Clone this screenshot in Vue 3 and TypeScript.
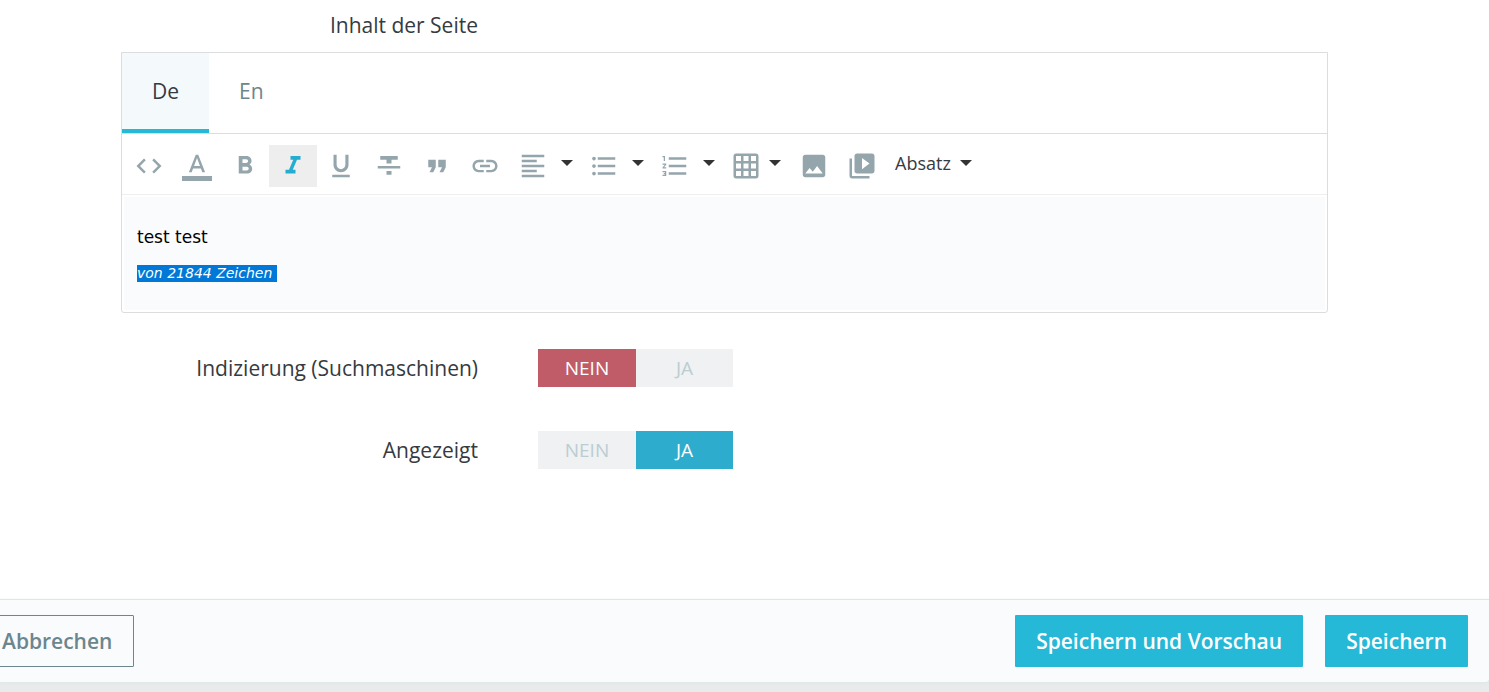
<script setup lang="ts">
import { ref } from 'vue'

interface Tool {
  id: string
  label: string
  path: string
  menu?: boolean
  tight?: boolean
}

const tools: Tool[] = [
  { id: 'code', label: 'Quelltext', path: 'M9.4 16.6 4.8 12l4.6-4.6L8 6l-6 6 6 6 1.4-1.4zm5.2 0 4.6-4.6-4.6-4.6L16 6l6 6-6 6-1.4-1.4z' },
  { id: 'color', label: 'Textfarbe', path: 'M0 20h24v4H0zM11 3 5.5 17h2.25l1.12-3h6.25l1.12 3h2.25L13 3h-2zm-1.38 9L12 5.67 14.38 12H9.62z' },
  { id: 'bold', label: 'Fett', path: 'M15.6 10.79c.97-.67 1.65-1.77 1.65-2.79 0-2.26-1.75-4-4-4H7v14h7.04c2.09 0 3.71-1.7 3.71-3.79 0-1.52-.86-2.82-2.15-3.42zM10 6.5h3c.83 0 1.5.67 1.5 1.5s-.67 1.5-1.5 1.5h-3v-3zm3.5 9H10v-3h3.5c.83 0 1.5.67 1.5 1.5s-.67 1.5-1.5 1.5z' },
  { id: 'italic', label: 'Kursiv', path: 'M10 4v3h2.21l-3.42 8H6v3h8v-3h-2.21l3.42-8H18V4z' },
  { id: 'underline', label: 'Unterstrichen', path: 'M12 17c3.31 0 6-2.69 6-6V3h-2.5v8c0 1.93-1.57 3.5-3.5 3.5S8.5 12.93 8.5 11V3H6v8c0 3.31 2.69 6 6 6zm-7 2v2h14v-2H5z' },
  { id: 'strike', label: 'Durchgestrichen', path: 'M10 19h4v-3h-4v3zM5 4v3h5v3h4V7h5V4H5zM3 14h18v-2H3v2z' },
  { id: 'quote', label: 'Zitat', path: 'M6 17h3l2-4V7H5v6h3zm8 0h3l2-4V7h-6v6h3z' },
  { id: 'link', label: 'Link', path: 'M3.9 12c0-1.71 1.39-3.1 3.1-3.1h4V7H7c-2.76 0-5 2.24-5 5s2.24 5 5 5h4v-1.9H7c-1.71 0-3.1-1.39-3.1-3.1zM8 13h8v-2H8v2zm9-6h-4v1.9h4c1.71 0 3.1 1.39 3.1 3.1s-1.39 3.1-3.1 3.1h-4V17h4c2.76 0 5-2.24 5-5s-2.24-5-5-5z' },
  { id: 'align', label: 'Ausrichtung', menu: true, path: 'M15 15H3v2h12v-2zm0-8H3v2h12V7zM3 13h18v-2H3v2zm0 8h18v-2H3v2zM3 3v2h18V3H3z' },
  { id: 'ul', label: 'Aufzählung', menu: true, path: 'M4 10.5c-.83 0-1.5.67-1.5 1.5s.67 1.5 1.5 1.5 1.5-.67 1.5-1.5-.67-1.5-1.5-1.5zm0-6c-.83 0-1.5.67-1.5 1.5S3.17 7.5 4 7.5 5.5 6.83 5.5 6 4.83 4.5 4 4.5zm0 12c-.83 0-1.5.68-1.5 1.5s.68 1.5 1.5 1.5 1.5-.68 1.5-1.5-.67-1.5-1.5-1.5zM7 19h14v-2H7v2zm0-6h14v-2H7v2zm0-8v2h14V5H7z' },
  { id: 'ol', label: 'Nummerierung', menu: true, path: 'M2 17h2v.5H3v1h1v.5H2v1h3v-4H2v1zm1-9h1V4H2v1h1v3zm-1 3h1.8L2 13.1v.9h3v-1H3.2L5 10.9V10H2v1zm5-6v2h14V5H7zm0 14h14v-2H7v2zm0-6h14v-2H7v2z' },
  { id: 'table', label: 'Tabelle', menu: true, tight: true, path: 'M20 2H4c-1.1 0-2 .9-2 2v16c0 1.1.9 2 2 2h16c1.1 0 2-.9 2-2V4c0-1.1-.9-2-2-2zM8 20H4v-4h4v4zm0-6H4v-4h4v4zm0-6H4V4h4v4zm6 12h-4v-4h4v4zm0-6h-4v-4h4v4zm0-6h-4V4h4v4zm6 12h-4v-4h4v4zm0-6h-4v-4h4v4zm0-6h-4V4h4v4z' },
  { id: 'image', label: 'Bild', path: 'M21 19V5c0-1.1-.9-2-2-2H5c-1.1 0-2 .9-2 2v14c0 1.1.9 2 2 2h14c1.1 0 2-.9 2-2zM8.5 13.5l2.5 3.01L14.5 12l4.5 6H5l3.5-4.5z' },
  { id: 'video', label: 'Video', path: 'M4 6H2v14c0 1.1.9 2 2 2h14v-2H4V6zm16-4H8c-1.1 0-2 .9-2 2v12c0 1.1.9 2 2 2h12c1.1 0 2-.9 2-2V4c0-1.1-.9-2-2-2zm-8 12.5v-9l6 4.5-6 4.5z' },
]

const languages = ['De', 'En']
const language = ref('De')
const activeTool = ref('italic')
const indexing = ref('nein')
const displayed = ref('ja')
</script>

<template>
  <main class="page">
    <form class="card" @submit.prevent>
      <div class="fields">
        <div class="row heading">
          <span id="content-label" class="label">Inhalt der Seite</span>
        </div>

        <section class="editor" aria-labelledby="content-label">
          <div class="tabs" role="tablist">
            <button
              v-for="item in languages"
              :key="item"
              type="button"
              role="tab"
              class="tab"
              :class="{ active: language === item }"
              :aria-selected="language === item"
              @click="language = item"
            >{{ item }}</button>
          </div>
          <div class="toolbar" role="toolbar" aria-label="Formatierung">
            <button
              v-for="tool in tools"
              :key="tool.id"
              type="button"
              class="tool"
              :class="{ active: activeTool === tool.id, menu: tool.menu, tight: tool.tight }"
              :aria-label="tool.label"
              @click="activeTool = tool.id"
            >
              <svg class="icon" viewBox="0 0 24 24" aria-hidden="true"><path :d="tool.path" /></svg>
              <span v-if="tool.menu" class="caret"></span>
            </button>
            <button type="button" class="format">Absatz<span class="caret"></span></button>
          </div>
          <div class="content">
            <div class="document" contenteditable="true" role="textbox" aria-multiline="true" aria-labelledby="content-label" spellcheck="false">
              <p>test test</p>
              <p class="count"><em>von 21844 Zeichen&nbsp;</em></p>
            </div>
          </div>
        </section>

        <div class="row" role="radiogroup" aria-labelledby="index-label">
          <span id="index-label" class="label">Indizierung (Suchmaschinen)</span>
          <div class="switch">
            <label class="option no"><input v-model="indexing" type="radio" name="indexing" value="nein">NEIN</label>
            <label class="option yes"><input v-model="indexing" type="radio" name="indexing" value="ja">JA</label>
          </div>
        </div>
        <div class="row" role="radiogroup" aria-labelledby="display-label">
          <span id="display-label" class="label">Angezeigt</span>
          <div class="switch">
            <label class="option no"><input v-model="displayed" type="radio" name="displayed" value="nein">NEIN</label>
            <label class="option yes"><input v-model="displayed" type="radio" name="displayed" value="ja">JA</label>
          </div>
        </div>
      </div>

      <footer class="actions">
        <button type="button" class="button outline">Abbrechen</button>
        <div class="group">
          <button type="submit" class="button">Speichern und Vorschau</button>
          <button type="submit" class="button">Speichern</button>
        </div>
      </footer>
    </form>
  </main>
</template>

<style>
body {
  margin: 0;
  background: #e9eaeb;
}
</style>

<style scoped>
.page {
  padding-bottom: 10px;
  overflow: hidden;
  color: #363a41;
  font-family: "Open Sans", "Noto Sans", sans-serif;
  font-size: 21px;
  line-height: 28px;
}
.page *,
.page *::before {
  box-sizing: border-box;
}
button {
  margin: 0;
  border: 0;
  background: none;
  color: inherit;
  font: inherit;
  cursor: pointer;
}
.card {
  background: #fff;
  border-radius: 0 0 4px 0;
}
.fields {
  padding: 11px 161px 130px 121px;
}
.row {
  display: grid;
  grid-template-columns: 357px 1fr;
  column-gap: 60px;
  align-items: center;
  margin-top: 44px;
}
.label {
  text-align: right;
}
.heading {
  margin: 0 0 13px;
}
.editor {
  margin-bottom: 36px;
  border: 1px solid #dcdddf;
  border-radius: 0 0 3px 3px;
}
.editor + .row {
  margin-top: 0;
}
.tabs {
  display: flex;
  border-bottom: 1px solid #dcdddf;
}
.tab {
  height: 80px;
  padding: 0 30px;
  border-bottom: 4px solid transparent;
  color: #6c868e;
}
.tab.active {
  background: #f4f9fc;
  border-bottom-color: #25b9d7;
  color: #363a41;
}
.toolbar {
  display: flex;
  align-items: center;
  height: 61px;
  padding: 7px 3px 3px;
  border-bottom: 1px solid #eeeeef;
}
.tool {
  display: flex;
  align-items: center;
  width: 48px;
  height: 42px;
  padding: 0 9px;
  color: #95a5ac;
}
.tool.active {
  background: #eee;
  color: #25add0;
}
.tool.menu {
  width: 71px;
  gap: 13px;
}
.tool.tight {
  width: 68px;
  gap: 8px;
}
.icon {
  flex: none;
  width: 30px;
  height: 30px;
  fill: currentColor;
}
.caret {
  flex: none;
  margin-bottom: 6px;
  border: 6px solid transparent;
  border-top-color: #333;
  border-bottom: 0;
}
.format {
  display: flex;
  align-items: center;
  gap: 9px;
  padding: 0 9px 6px;
  font-size: 18px;
}
.format .caret {
  margin-bottom: 0;
}
.content {
  padding: 2px;
}
.document {
  padding: 29px 13px 28px;
  background: #fafbfd;
  color: #000;
  font-family: Verdana, "DejaVu Sans", sans-serif;
  font-size: 17px;
  line-height: 23px;
  outline: 0;
}
.document p {
  margin: 0;
}
.document .count {
  display: flex;
  margin-top: 16px;
  font-size: 14px;
  line-height: 17px;
}
.count em {
  background: #0078d7;
  color: #fff;
}
.switch {
  display: grid;
  grid-template-columns: 98px 97px;
}
.option {
  display: flex;
  align-items: center;
  justify-content: center;
  height: 38px;
  background: #eff1f2;
  color: #bbcdd2;
  font-size: 19px;
  cursor: pointer;
}
.option input {
  appearance: none;
  width: 0;
  height: 0;
  margin: 0;
}
.option:has(input:checked) {
  color: #fff;
}
.no:has(input:checked) {
  background: #c05c67;
}
.yes:has(input:checked) {
  background: #2eacce;
}
.actions {
  display: flex;
  justify-content: space-between;
  padding: 15px 21px 15px 0;
  border-top: 1px solid #dbe6e9;
  border-radius: 0 0 4px 0;
  background: #fafbfd;
  box-shadow: 0 1px 3px #dbe6e9;
}
.group {
  display: flex;
  gap: 22px;
}
.button {
  height: 52px;
  padding: 0 21px;
  border-radius: 1px;
  background: #25b9d7;
  color: #fff;
  font-weight: 600;
}
.outline {
  margin-left: -20px;
  border: 1px solid #6c868e;
  background: transparent;
  color: #6c868e;
}
</style>
